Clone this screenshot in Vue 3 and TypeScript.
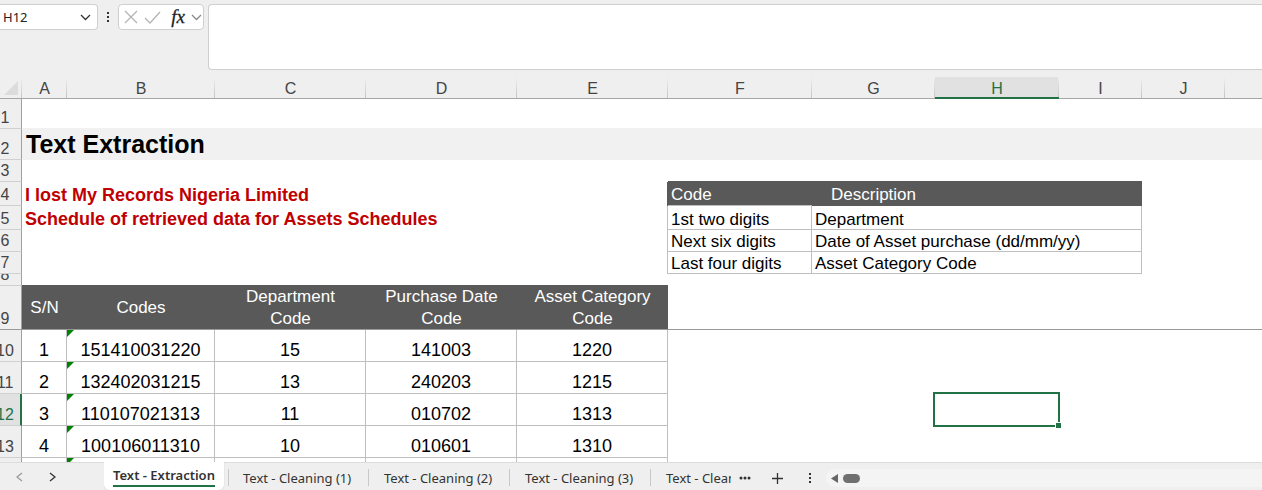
<script setup lang="ts">
import { ref } from 'vue'

interface Cell {
  text?: string
  span?: number
  kind?: string
  flagged?: boolean
  selected?: boolean
}

interface Row {
  label: string
  height: number
  kind?: string
  cells: Cell[]
}

interface Column {
  name: string
  width: number
}

const columns: Column[] = [
  { name: 'A', width: 45 },
  { name: 'B', width: 148 },
  { name: 'C', width: 151 },
  { name: 'D', width: 151 },
  { name: 'E', width: 151 },
  { name: 'F', width: 144 },
  { name: 'G', width: 123 },
  { name: 'H', width: 124 },
  { name: 'I', width: 83 },
  { name: 'J', width: 83 },
]

const record = (label: string, values: string[], active = false): Row => ({
  label,
  height: 32,
  kind: active ? 'active' : '',
  cells: [
    ...values.map((text, i) => ({ text, kind: 'data', flagged: i === 1 })),
    {},
    {},
    { selected: active },
    {},
    {},
    {},
  ],
})

const legend = (label: string, height: number, code: string, description: string, lead: Cell): Row => ({
  label,
  height,
  cells: [
    { span: 5, ...lead, kind: `edge ${lead.kind ?? ''}` },
    { text: code, kind: 'legend' },
    { text: description, span: 3, kind: 'legend' },
    {},
    {},
  ],
})

const rows: Row[] = [
  { label: '1', height: 30, cells: [{ span: 11, kind: 'band-above' }] },
  { label: '2', height: 31, kind: 'band', cells: [{ text: 'Text Extraction', span: 11, kind: 'title' }] },
  { label: '3', height: 22, cells: [{ span: 5 }, { span: 4, kind: 'dark-below' }, { span: 2 }] },
  {
    label: '4',
    height: 24,
    cells: [
      { text: 'I lost My Records Nigeria Limited', span: 5, kind: 'red edge-dark' },
      { text: 'Code', kind: 'legend-head ruled' },
      { text: 'Description', span: 3, kind: 'legend-head indent' },
      {},
      {},
    ],
  },
  legend('5', 24, '1st two digits', 'Department', {
    text: 'Schedule of retrieved data for Assets Schedules',
    kind: 'red',
  }),
  legend('6', 22, 'Next six digits', 'Date of Asset purchase (dd/mm/yy)', {}),
  legend('7', 22, 'Last four digits', 'Asset Category Code', {}),
  { label: '8', height: 12, cells: [{ span: 5, kind: 'dark-below' }, { span: 6 }] },
  {
    label: '9',
    height: 44,
    kind: 'freeze',
    cells: [
      ...['S/N', 'Codes', 'Department Code', 'Purchase Date Code', 'Asset Category Code'].map((text) => ({
        text,
        kind: 'head',
      })),
      { span: 6, kind: 'open' },
    ],
  },
  record('10', ['1', '151410031220', '15', '141003', '1220']),
  record('11', ['2', '132402031215', '13', '240203', '1215']),
  record('12', ['3', '110107021313', '11', '010702', '1313'], true),
  record('13', ['4', '100106011310', '10', '010601', '1310']),
  record('', ['', '', '', '', '']),
]

const tabs = ['Text - Extraction', 'Text - Cleaning (1)', 'Text - Cleaning (2)', 'Text - Cleaning (3)', 'Text - Cleaning (4)']
const activeTab = ref(0)
const cellName = ref('H12')
const formula = ref('')
</script>

<template>
  <div class="app">
    <header class="formula-bar">
      <div class="name-box">
        <input v-model="cellName" aria-label="Name box" />
        <button aria-label="Cell names">
          <svg width="11" height="7" viewBox="0 0 11 7"><path d="M1 1l4.5 4.5L10 1" /></svg>
        </button>
      </div>
      <svg class="grip" width="4" height="12" viewBox="0 0 4 12">
        <path d="M1 1h2v2H1zM1 5h2v2H1zM1 9h2v2H1z" />
      </svg>
      <div class="tools">
        <button aria-label="Cancel">
          <svg class="faint" width="14" height="14" viewBox="0 0 14 14"><path d="M1 1l12 12M13 1L1 13" /></svg>
        </button>
        <button aria-label="Enter">
          <svg class="faint" width="17" height="13" viewBox="0 0 17 13"><path d="M1 7l5 5L16 1" /></svg>
        </button>
        <button class="fx" aria-label="Insert function"><i>fx</i></button>
        <button aria-label="Recent functions">
          <svg class="soft" width="11" height="7" viewBox="0 0 11 7"><path d="M1 1l4.5 4.5L10 1" /></svg>
        </button>
      </div>
      <textarea v-model="formula" aria-label="Formula"></textarea>
    </header>

    <main class="sheet">
      <table>
        <colgroup>
          <col class="label-col" />
          <col v-for="c in columns" :key="c.name" :style="{ width: c.width + 'px' }" />
          <col />
        </colgroup>
        <thead>
          <tr>
            <th class="corner">
              <svg width="14" height="14" viewBox="0 0 14 14"><path d="M14 0v14H0z" /></svg>
            </th>
            <th v-for="c in columns" :key="c.name" scope="col" :class="{ current: c.name === 'H' }">{{ c.name }}</th>
            <th class="last"></th>
          </tr>
        </thead>
        <tbody>
          <tr v-for="(row, r) in rows" :key="r" :class="row.kind" :style="{ height: row.height + 'px' }">
            <th scope="row">
              <div :style="{ height: row.height - 1 + 'px' }"><span>{{ row.label }}</span></div>
            </th>
            <td v-for="(cell, i) in row.cells" :key="i" :colspan="cell.span ?? 1" :class="cell.kind">
              <svg v-if="cell.flagged" class="flag" width="7" height="7" viewBox="0 0 7 7"><path d="M0 0h7L0 7z" /></svg>
              {{ cell.text }}
              <div v-if="cell.selected" class="selection"><span class="handle"></span></div>
            </td>
          </tr>
        </tbody>
      </table>
    </main>

    <footer class="tab-bar">
      <div class="pager">
        <button aria-label="Previous sheet">
          <svg class="prev" width="7" height="10" viewBox="0 0 7 10"><path d="M6 1L1 5l5 4" /></svg>
        </button>
        <button aria-label="Next sheet">
          <svg width="7" height="10" viewBox="0 0 7 10"><path d="M1 1l5 4-5 4" /></svg>
        </button>
      </div>
      <nav class="tabs" aria-label="Sheets">
        <button v-for="(t, i) in tabs" :key="t" :class="{ active: i === activeTab }" @click="activeTab = i">
          <span>{{ t }}</span>
        </button>
      </nav>
      <button class="more" aria-label="More sheets">
        <svg width="12" height="4" viewBox="0 0 12 4">
          <circle cx="2" cy="2" r="1.5" /><circle cx="6" cy="2" r="1.5" /><circle cx="10" cy="2" r="1.5" />
        </svg>
      </button>
      <button class="add" aria-label="New sheet">
        <svg width="11" height="11" viewBox="0 0 11 11"><path d="M5.5 0v11M0 5.5h11" /></svg>
      </button>
      <svg class="grip" width="4" height="12" viewBox="0 0 4 12">
        <path d="M1 1h2v2H1zM1 5h2v2H1zM1 9h2v2H1z" />
      </svg>
      <div class="scroll">
        <button aria-label="Scroll left">
          <svg width="7" height="9" viewBox="0 0 7 9"><path d="M7 0v9L0 4.5z" /></svg>
        </button>
        <span class="thumb"></span>
      </div>
    </footer>
  </div>
</template>

<style>
body {
  margin: 0;
}
</style>

<style scoped>
.app {
  display: flex;
  flex-direction: column;
  height: 100vh;
  overflow: hidden;
  background: #efefef;
  color: #000;
  font-family: 'Liberation Sans', Arial, sans-serif;
  font-size: 17px;
}

button,
input,
textarea {
  border: 0;
  margin: 0;
  padding: 0;
  background: none;
  color: inherit;
  font: inherit;
  outline: none;
}

button {
  display: flex;
  align-items: center;
  justify-content: center;
}

svg {
  display: block;
  fill: none;
  stroke: #333;
  stroke-width: 1.3;
}

.formula-bar {
  display: flex;
  align-items: flex-start;
  padding: 4px 0 7px;
}

.name-box,
.tools {
  display: flex;
  align-items: center;
  box-sizing: border-box;
  height: 26px;
  border: 1px solid #cfcfcf;
  border-radius: 4px;
  background: #fff;
}

.name-box {
  width: 98px;
  border-left: 0;
  border-radius: 0 4px 4px 0;
  padding: 0 6px 0 3px;
}

.name-box input {
  flex: 1;
  min-width: 0;
  font-family: 'Noto Sans', 'Open Sans', sans-serif;
  font-size: 13px;
  color: #222;
}

.grip {
  fill: #333;
  stroke: none;
  flex: none;
}

.formula-bar .grip {
  margin: 7px 8px 0;
}

.tools {
  width: 86px;
  justify-content: space-between;
  padding: 0 1px 0 5px;
}

.faint {
  stroke: #b4b4b4;
}

.soft {
  stroke: #8a8a8a;
}

.fx {
  padding-left: 4px;
  font-family: 'Liberation Serif', 'Times New Roman', serif;
  font-size: 19px;
  line-height: 20px;
  color: #222;
  -webkit-text-stroke: 0.3px #222;
}

.formula-bar textarea {
  flex: 1;
  box-sizing: border-box;
  height: 66px;
  margin-left: 4px;
  border: 1px solid #cfcfcf;
  border-right: 0;
  border-radius: 4px 0 0 4px;
  background: #fff;
  resize: none;
}

.sheet {
  flex: 1;
  min-height: 0;
  overflow: hidden;
  background: #fff;
}

table {
  width: 100%;
  table-layout: fixed;
  border-collapse: separate;
  border-spacing: 0;
}

.label-col {
  width: 22px;
}

th,
td {
  box-sizing: border-box;
  padding: 0;
  font-weight: 400;
}

thead th {
  height: 22px;
  border-bottom: 1px solid #a6a6a6;
  background: linear-gradient(#efefef, #c4c4c4) right / 1px 100% no-repeat #efefef;
  color: #444;
  font-size: 16px;
  line-height: 18px;
  vertical-align: bottom;
}

thead th.last {
  background: #efefef;
}

thead th.current {
  border-bottom: 2px solid #217346;
  background-color: #e1e1e1;
  color: #217346;
  line-height: 17px;
}

.corner svg {
  margin: 0 0 3px 4px;
  fill: #dcdcdc;
  stroke: none;
}

tbody th {
  border-right: 1px solid #a0a0a0;
  border-bottom: 1px solid #d0d0d0;
  background: #efefef;
  color: #444;
  font-size: 16px;
}

tbody th div {
  display: flex;
  align-items: flex-end;
  justify-content: center;
  width: 10px;
  overflow-x: visible;
  overflow-y: clip;
}

tbody th span {
  line-height: 20px;
}

tr.active th {
  border-right: 2px solid #217346;
  background: #e1e1e1;
  color: #217346;
}

td {
  position: relative;
  line-height: 19px;
  vertical-align: bottom;
  white-space: nowrap;
}

.band td {
  background: #f1f1f1;
}

.band-above {
  border-bottom: 1px solid #f1f1f1;
}

.title {
  padding-left: 4px;
  font-size: 25px;
  font-weight: 700;
  line-height: 31px;
}

.red {
  padding-left: 3px;
  color: #c00000;
  font-size: 18px;
  font-weight: 700;
  line-height: 22px;
}

.edge {
  border-right: 1px solid #bfbfbf;
}

.edge-dark {
  border-right: 1px solid #595959;
}

.dark-below {
  border-bottom: 1px solid #595959;
}

.legend,
.legend-head {
  padding-left: 3px;
}

.legend {
  border-right: 1px solid #bfbfbf;
  border-bottom: 1px solid #bfbfbf;
}

.legend-head {
  background: #595959;
  color: #fff;
  line-height: 21px;
}

.ruled {
  border-bottom: 1px solid #bfbfbf;
}

.indent {
  padding-left: 19px;
  line-height: 23px;
}

.freeze th,
.open {
  border-bottom: 1px solid #999;
}

.head {
  padding: 0 16px;
  background: #595959;
  box-shadow: inset 0 -1px #999;
  color: #fff;
  line-height: 22px;
  text-align: center;
  vertical-align: middle;
  white-space: normal;
}

.head:nth-child(2) {
  padding: 0;
}

.data {
  border-right: 1px solid #bfbfbf;
  border-bottom: 1px solid #bfbfbf;
  font-size: 18px;
  line-height: 22px;
  text-align: center;
}

.flag {
  position: absolute;
  top: 0;
  left: 0;
  fill: #008000;
  stroke: none;
}

.selection {
  position: absolute;
  inset: -2px -1px -1px -2px;
  border: 2px solid #217346;
}

.handle {
  position: absolute;
  right: -4px;
  bottom: -4px;
  width: 5px;
  height: 5px;
  border: 1px solid #fff;
  background: #217346;
}

.tab-bar {
  display: flex;
  align-items: stretch;
  height: 28px;
  background: #efefef;
  box-shadow: inset 0 1px #dcdcdc;
  color: #333;
  font-family: 'Noto Sans', 'Open Sans', sans-serif;
  font-size: 13px;
}

.pager {
  display: flex;
  align-items: center;
  gap: 26px;
  width: 88px;
  padding: 2px 0 0 16px;
}

.prev {
  stroke: #999;
}

.tabs {
  display: flex;
  width: 627px;
  overflow: hidden;
}

.tabs button {
  position: relative;
  flex: none;
  justify-content: flex-start;
  box-sizing: border-box;
  width: 141px;
  padding: 4px 0 0 15px;
  white-space: nowrap;
}

.tabs button:not(:last-child)::after {
  content: '';
  position: absolute;
  top: 7px;
  right: 0;
  width: 1px;
  height: 17px;
  background: #c8c8c8;
}

.tabs .active {
  align-items: flex-start;
  justify-content: center;
  width: 120px;
  margin-right: 4px;
  padding: 4px 0 0;
  border-radius: 0 0 5px 5px;
  background: #fff;
  box-shadow: 0 0 1px #aaa;
  font-weight: 600;
}

.tabs .active:not(:last-child)::after {
  right: -5px;
}

.tabs .active span {
  border-bottom: 2px solid #217346;
  line-height: 19px;
}

.more {
  margin-left: 8px;
  padding-top: 4px;
}

.more svg {
  fill: #333;
  stroke: none;
}

.add {
  margin-left: 21px;
  padding-top: 4px;
}

.tab-bar .grip {
  align-self: center;
  margin: 4px 14px 0 25px;
}

.scroll {
  display: flex;
  flex: 1;
  align-items: center;
  gap: 5px;
  height: 18px;
  margin-top: 7px;
  padding-left: 5px;
  border-radius: 9px 0 0 9px;
  background: #f4f4f4;
}

.scroll svg {
  fill: #666;
  stroke: none;
}

.thumb {
  width: 17px;
  height: 9px;
  border-radius: 5px;
  background: #707070;
}
</style>
